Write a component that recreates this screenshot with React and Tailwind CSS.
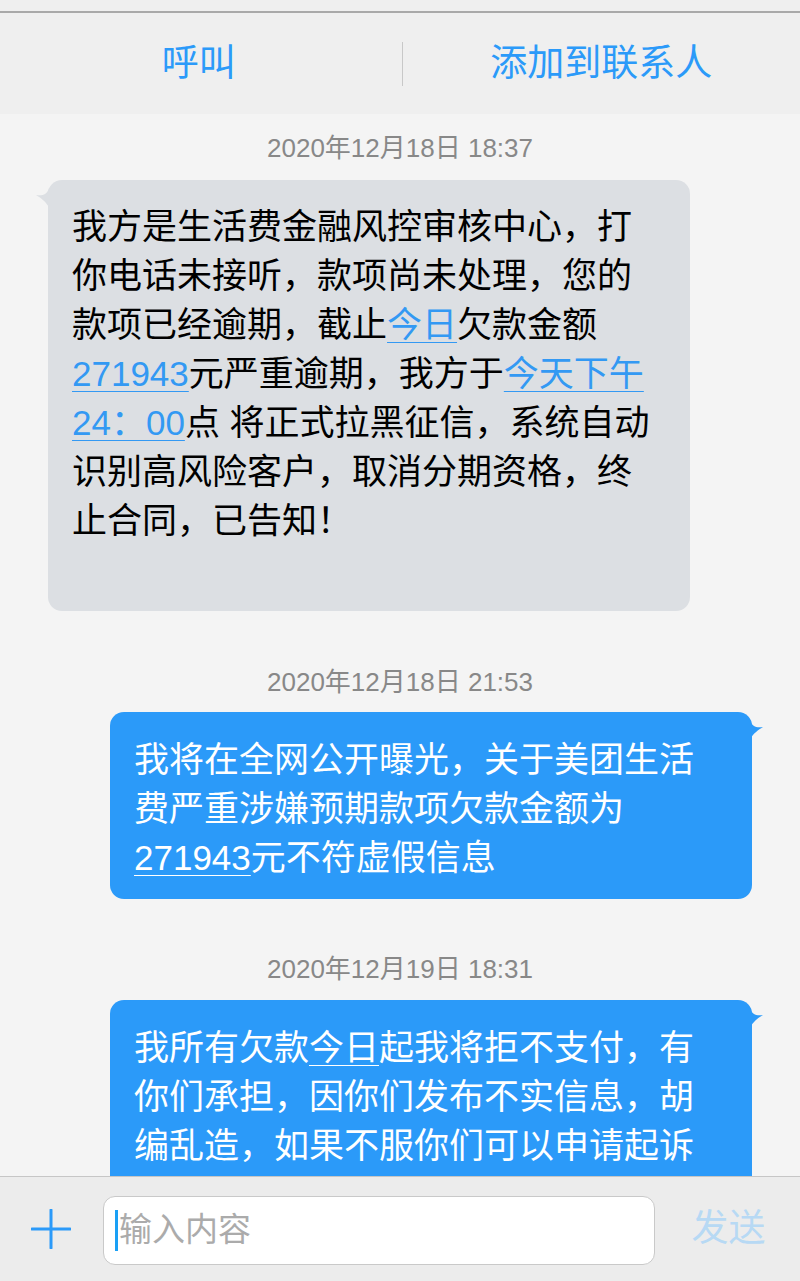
import React from 'react';

const font = { fontFamily: '"Liberation Sans", "Noto Sans CJK SC", sans-serif' };

const LeftTail = () => (
  <svg className="absolute left-[-13px] top-[7px]" width="18" height="22" viewBox="0 0 18 22">
    <path d="M18 0 L14 1 C12 8 7 9 1 8 C6 11 10 14 14 20 L18 20 Z" fill="#dcdfe3" />
  </svg>
);

const RightTail = () => (
  <svg className="absolute right-[-12px] top-[7px]" width="18" height="22" viewBox="0 0 18 22">
    <path d="M0 0 L4 1 C6 8 11 9 17 8 C12 11 8 14 4 20 L0 20 Z" fill="#2b9af9" />
  </svg>
);

const Stamp = ({ children, className }) => (
  <div className={`text-center text-[26px] leading-[30px] text-[#888888] ${className}`}>{children}</div>
);

const GrayLink = ({ children }) => (
  <span className="text-[#3399f3] underline decoration-1 underline-offset-[5px]">{children}</span>
);

const WhiteLink = ({ children }) => (
  <span className="underline decoration-1 underline-offset-[5px]">{children}</span>
);

export default function App() {
  return (
    <div className="h-[1281px] w-[800px] flex flex-col overflow-hidden bg-[#f4f4f4]" style={font}>
      {/* top bar */}
      <div className="h-[11px] bg-[#efefef]" />
      <div className="h-[2px] bg-[#a9a9a9]" />
      <div className="h-[101px] bg-[#efefef] flex items-center text-[37px] text-[#2b9af9]">
        <div className="flex-1 text-center pr-[4px]">呼叫</div>
        <div className="w-px h-[44px] bg-[#c8c8c8]" />
        <div className="flex-1 text-center">添加到联系人</div>
      </div>

      {/* messages */}
      <div className="flex-1 overflow-hidden flex flex-col">
        <Stamp className="mt-[19px]">2020年12月18日 18:37</Stamp>
        <div className="relative mt-[17px] ml-[48px] w-[642px] rounded-[14px] bg-[#dcdfe3] pl-[24px] pt-[22px] pb-[17px] text-[35px] leading-[49px] text-black whitespace-nowrap">
          <LeftTail />
          我方是生活费金融风控审核中心，打<br />
          你电话未接听，款项尚未处理，您的<br />
          款项已经逾期，截止<GrayLink>今日</GrayLink>欠款金额<br />
          <GrayLink>271943</GrayLink>元严重逾期，我方于<GrayLink>今天下午</GrayLink><br />
          <GrayLink>24：00</GrayLink>点 将正式拉黑征信，系统自动<br />
          识别高风险客户，取消分期资格，终<br />
          止合同，已告知！<br />
          <br />
        </div>

        <Stamp className="mt-[56px]">2020年12月18日 21:53</Stamp>
        <div className="relative mt-[15px] ml-[110px] w-[642px] rounded-[14px] bg-[#2b9af9] pl-[24px] pt-[23px] pb-[17px] text-[35px] leading-[49px] text-white whitespace-nowrap">
          <RightTail />
          我将在全网公开曝光，关于美团生活<br />
          费严重涉嫌预期款项欠款金额为<br />
          <WhiteLink>271943</WhiteLink>元不符虚假信息
        </div>

        <Stamp className="mt-[55px]">2020年12月19日 18:31</Stamp>
        <div className="relative mt-[16px] ml-[110px] w-[642px] shrink-0 rounded-[14px] bg-[#2b9af9] pl-[24px] pt-[23px] pb-[17px] text-[35px] leading-[49px] text-white whitespace-nowrap">
          <RightTail />
          我所有欠款<WhiteLink>今日</WhiteLink>起我将拒不支付，有<br />
          你们承担，因你们发布不实信息，胡<br />
          编乱造，如果不服你们可以申请起诉<br />
          <br />
        </div>
      </div>

      {/* input bar */}
      <div className="h-[105px] shrink-0 border-t border-[#c6c6c6] bg-[#ececec] flex items-center">
        <div className="w-[103px] flex justify-center pr-[2px]">
          <svg width="40" height="40" viewBox="0 0 40 40">
            <path d="M20 1 V39 M1 20 H39" stroke="#2b9af9" strokeWidth="3" strokeLinecap="round" />
          </svg>
        </div>
        <div className="w-[552px] h-[69px] mt-[2px] rounded-[12px] border border-[#c9c9c9] bg-white flex items-center pl-[11px]">
          <div className="w-[3px] h-[41px] bg-[#1aa0f5]" />
          <span className="text-[33px] text-[#ababab] ml-[1px]">输入内容</span>
        </div>
        <div className="flex-1 text-center text-[37px] text-[#b7d9f4] pl-[2px]">发送</div>
      </div>
    </div>
  );
}
